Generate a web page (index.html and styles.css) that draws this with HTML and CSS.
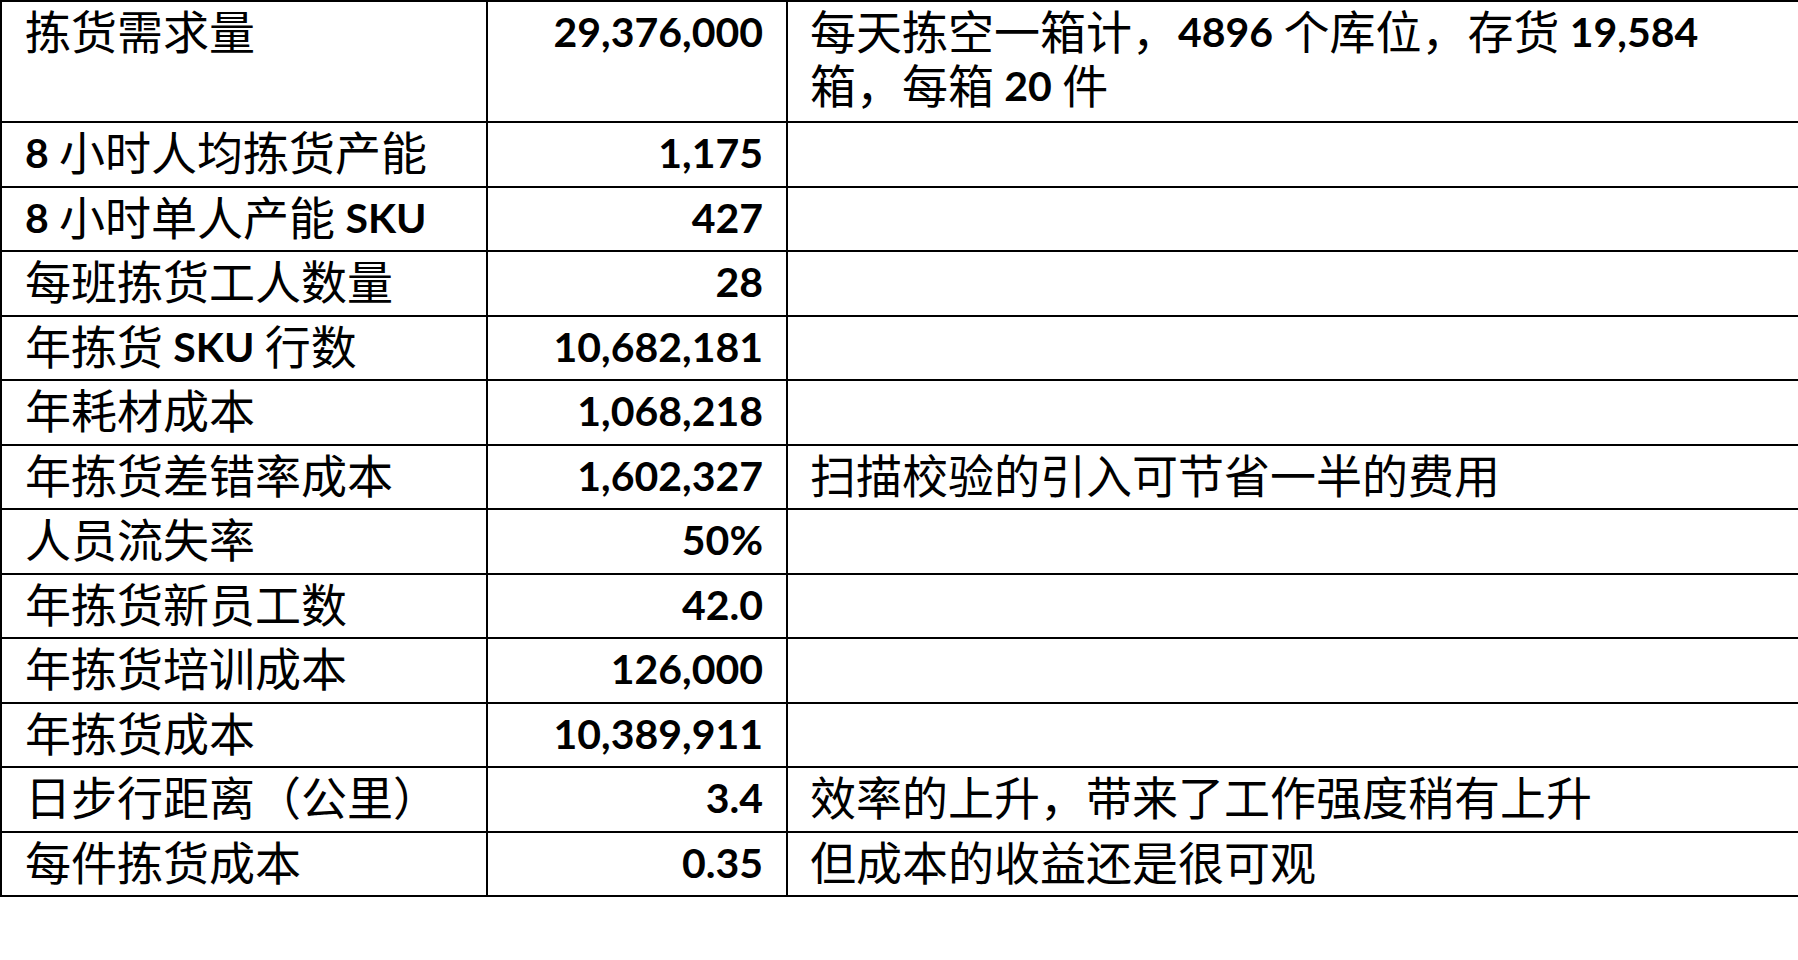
FILE: index.html
```html
<!DOCTYPE html>
<html lang="zh-CN">
<head>
<meta charset="utf-8">
<title>拣货成本</title>
<link rel="stylesheet" href="styles.css">
</head>
<body>
<table class="sheet">
  <colgroup>
    <col class="c-label">
    <col class="c-value">
    <col class="c-note">
  </colgroup>
  <tbody>
    <tr class="tall">
      <td class="label">拣货需求量</td>
      <td class="value"><span class="num">29,376,000</span></td>
      <td class="note">每天拣空一箱计，<span class="num">4896</span> 个库位，存货 <span class="num">19,584</span><br>箱，每箱 <span class="num">20</span> 件</td>
    </tr>
    <tr>
      <td class="label"><span class="lat">8</span> 小时人均拣货产能</td>
      <td class="value"><span class="num">1,175</span></td>
      <td class="note"></td>
    </tr>
    <tr>
      <td class="label"><span class="lat">8</span> 小时单人产能 <span class="lat">SKU</span></td>
      <td class="value"><span class="num">427</span></td>
      <td class="note"></td>
    </tr>
    <tr>
      <td class="label">每班拣货工人数量</td>
      <td class="value"><span class="num">28</span></td>
      <td class="note"></td>
    </tr>
    <tr>
      <td class="label">年拣货 <span class="lat">SKU</span> 行数</td>
      <td class="value"><span class="num">10,682,181</span></td>
      <td class="note"></td>
    </tr>
    <tr>
      <td class="label">年耗材成本</td>
      <td class="value"><span class="num">1,068,218</span></td>
      <td class="note"></td>
    </tr>
    <tr>
      <td class="label">年拣货差错率成本</td>
      <td class="value"><span class="num">1,602,327</span></td>
      <td class="note">扫描校验的引入可节省一半的费用</td>
    </tr>
    <tr>
      <td class="label">人员流失率</td>
      <td class="value"><span class="num">50%</span></td>
      <td class="note"></td>
    </tr>
    <tr>
      <td class="label">年拣货新员工数</td>
      <td class="value"><span class="num">42.0</span></td>
      <td class="note"></td>
    </tr>
    <tr>
      <td class="label">年拣货培训成本</td>
      <td class="value"><span class="num">126,000</span></td>
      <td class="note"></td>
    </tr>
    <tr>
      <td class="label">年拣货成本</td>
      <td class="value"><span class="num">10,389,911</span></td>
      <td class="note"></td>
    </tr>
    <tr>
      <td class="label">日步行距离（公里）</td>
      <td class="value"><span class="num">3.4</span></td>
      <td class="note">效率的上升，带来了工作强度稍有上升</td>
    </tr>
    <tr>
      <td class="label">每件拣货成本</td>
      <td class="value"><span class="num">0.35</span></td>
      <td class="note">但成本的收益还是很可观</td>
    </tr>
  </tbody>
</table>
</body>
</html>
```
FILE: styles.css
```css
html, body {
  margin: 0;
  padding: 0;
  background: #ffffff;
  overflow: hidden;
}

body {
  width: 1798px;
  height: 960px;
  font-family: "Noto Sans CJK SC", "Noto Sans", sans-serif;
  color: #000000;
}

.sheet {
  width: 1798px;
  table-layout: fixed;
  border-collapse: separate;
  border-spacing: 0;
  border-top: 2px solid #000;
  border-left: 2px solid #000;
}

.c-label { width: 486px; }
.c-value { width: 300px; }
.c-note { width: auto; }

.sheet td {
  border-right: 2px solid #000;
  border-bottom: 2px solid #000;
  padding: 0 23px 8.5px 23px;
  font-size: 46px;
  line-height: 54px;
  height: 54px;
  vertical-align: top;
  white-space: nowrap;
  font-weight: 400;
}

.sheet tr.tall td {
  padding-bottom: 11px;
}

.sheet td.note {
  border-right: none;
  padding-left: 22px;
}

.sheet td.value {
  text-align: right;
}

.num,
.lat {
  font-family: Lato, "Liberation Sans", sans-serif;
  font-size: 41px;
  line-height: 1;
  font-weight: 700;
  vertical-align: 2px;
}
```
